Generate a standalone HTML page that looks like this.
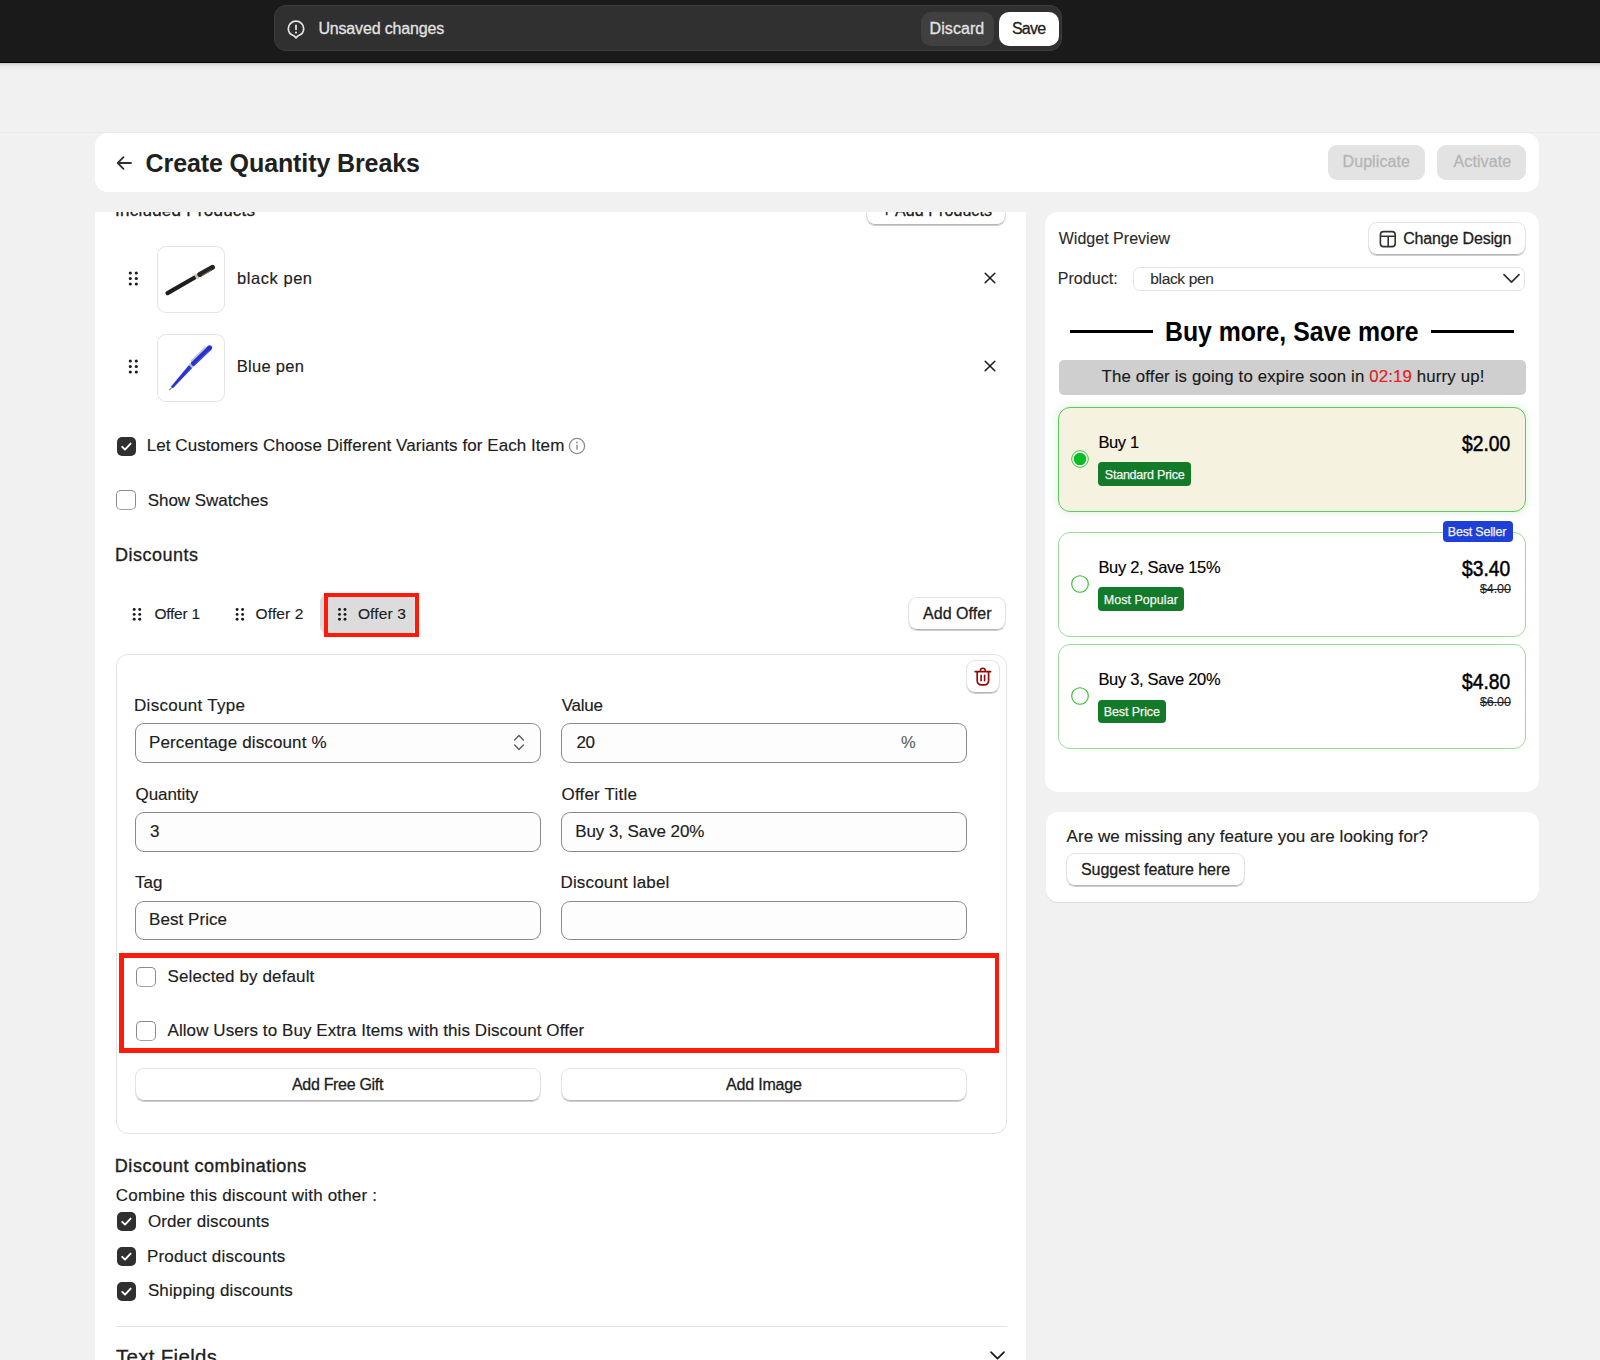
<!DOCTYPE html>
<html><head><meta charset="utf-8"><title>Create Quantity Breaks</title>
<style>
html,body{margin:0;padding:0}
body{width:1600px;height:1360px;overflow:hidden;position:relative;background:#f1f1f1;font-family:"Liberation Sans",sans-serif}
.t{position:absolute;line-height:1;white-space:nowrap}
</style></head><body>
<div style="position:absolute;left:0px;top:0px;width:1600px;height:63px;background:#1a1a1a"></div>
<div style="position:absolute;left:0px;top:62px;width:1600px;height:1px;background:#050505"></div>
<div style="position:absolute;left:0px;top:63px;width:1600px;height:8px;background:linear-gradient(to bottom,#c9c9c9 0%,#e2e2e2 25%,#ebebeb 55%,#f1f1f1 100%)"></div>
<div style="position:absolute;left:274px;top:5px;width:788px;height:46px;background:#303030;border:1px solid #3c3c3c;border-radius:12px;box-sizing:border-box"></div>
<svg style="position:absolute;left:287px;top:20px" width="18" height="19" viewBox="0 0 18 19">
<path d="M9 1.2C4.7 1.2 1.3 4.5 1.3 8.6c0 3.4 2.3 6.2 5.5 7.1L9 17.9l2.2-2.2c3.2-.9 5.5-3.7 5.5-7.1 0-4.1-3.4-7.4-7.7-7.4z" fill="none" stroke="#e3e3e3" stroke-width="1.7" stroke-linejoin="round"/>
<rect x="8.1" y="4.6" width="1.8" height="5.6" rx=".9" fill="#e3e3e3"/><circle cx="9" cy="12.6" r="1.1" fill="#e3e3e3"/></svg>
<div class="t" style="left:318.40px;top:21.00px;font-size:16px;font-weight:400;letter-spacing:-0.164px;color:#e3e3e3;-webkit-text-stroke:0.28px #e3e3e3;">Unsaved changes</div>
<div style="position:absolute;left:921px;top:12px;width:73px;height:34px;background:#404040;border-radius:10px"></div>
<div class="t" style="left:929.60px;top:21.00px;font-size:16px;font-weight:400;letter-spacing:0.067px;color:#e3e3e3;-webkit-text-stroke:0.28px #e3e3e3;">Discard</div>
<div style="position:absolute;left:999px;top:12px;width:60px;height:34px;background:#ffffff;border-radius:10px"></div>
<div class="t" style="left:1012.00px;top:21.00px;font-size:16px;font-weight:400;letter-spacing:-0.800px;color:#202020;-webkit-text-stroke:0.28px #202020;">Save</div>
<div style="position:absolute;left:0px;top:132px;width:1600px;height:1px;background:#eaeaea"></div>
<div style="position:absolute;left:95px;top:133px;width:1444px;height:59px;background:#fff;border-radius:13px"></div>
<svg style="position:absolute;left:114px;top:153px" width="20" height="20" viewBox="0 0 20 20">
<path d="M17 10H4M9.5 4.2 3.7 10l5.8 5.8" fill="none" stroke="#303030" stroke-width="1.8" stroke-linecap="round" stroke-linejoin="round"/></svg>
<div class="t" style="left:145.60px;top:151.00px;font-size:25px;font-weight:700;letter-spacing:-0.105px;color:#202020;">Create Quantity Breaks</div>
<div style="position:absolute;left:1328px;top:145px;width:97px;height:35px;background:#e3e3e3;border-radius:9px"></div>
<div class="t" style="left:1342.50px;top:154.00px;font-size:16px;font-weight:400;letter-spacing:0.088px;color:#b5b5b5;-webkit-text-stroke:0.28px #b5b5b5;">Duplicate</div>
<div style="position:absolute;left:1437px;top:145px;width:89px;height:35px;background:#e3e3e3;border-radius:9px"></div>
<div class="t" style="left:1453.60px;top:154.00px;font-size:16px;font-weight:400;letter-spacing:0.086px;color:#b5b5b5;-webkit-text-stroke:0.28px #b5b5b5;">Activate</div>
<div style="position:absolute;left:95px;top:212px;width:931px;height:1148px;background:#fff;overflow:hidden">
</div>
<div style="position:absolute;left:95px;top:212px;width:931px;height:40px;overflow:hidden">
<div style="position:absolute;left:-95px;top:-212px;width:1600px;height:300px">
<div class="t" style="left:115.00px;top:202.00px;font-size:17px;font-weight:400;letter-spacing:0.250px;color:#202020;-webkit-text-stroke:0.28px #202020;">Included Products</div>
<div style="position:absolute;left:866px;top:192px;width:140px;height:34px;background:#fff;border:1px solid #e3e3e3;border-bottom-color:#cfcfcf;border-radius:9px;box-shadow:inset 0 -1px 0 #b5b5b5;box-sizing:border-box"></div>
<div class="t" style="left:882.00px;top:203.00px;font-size:16px;font-weight:400;letter-spacing:0.077px;color:#202020;-webkit-text-stroke:0.28px #202020;">+ Add Products</div>
</div></div>
<svg style="position:absolute;left:0;top:0;overflow:visible" width="1" height="1"><circle cx="130.30" cy="273.00" r="1.55" fill="#1a1a1a"/><circle cx="130.30" cy="278.50" r="1.55" fill="#1a1a1a"/><circle cx="130.30" cy="284.00" r="1.55" fill="#1a1a1a"/><circle cx="136.30" cy="273.00" r="1.55" fill="#1a1a1a"/><circle cx="136.30" cy="278.50" r="1.55" fill="#1a1a1a"/><circle cx="136.30" cy="284.00" r="1.55" fill="#1a1a1a"/></svg>
<div style="position:absolute;left:157px;top:246px;width:68px;height:67px;border:1px solid #e3e3e3;border-radius:9px;box-sizing:border-box;background:#fff"></div>
<svg style="position:absolute;left:157px;top:246px" width="68" height="67" viewBox="0 0 68 67">
<path d="M10.6 47.1 L38.6 31.0" stroke="#1e1e1e" stroke-width="4.3" stroke-linecap="round"/>
<path d="M38.4 31.1 L42.9 28.5" stroke="#d6c6a0" stroke-width="4.9"/>
<path d="M42.8 28.5 L55.4 21.3" stroke="#242424" stroke-width="5" stroke-linecap="round"/>
<path d="M45 29.6 L54.5 24" stroke="#8a7a5a" stroke-width="0.9"/>
</svg>
<div class="t" style="left:237.00px;top:270.00px;font-size:16.5px;font-weight:400;letter-spacing:0.550px;color:#202020;-webkit-text-stroke:0.15px #202020;">black pen</div>
<svg style="position:absolute;left:983.5px;top:271.8px" width="12" height="12" viewBox="0 0 12 12"><path d="M1.2 1.2l9.6 9.6M10.8 1.2l-9.6 9.6" stroke="#1a1a1a" stroke-width="1.5" stroke-linecap="round"/></svg>
<svg style="position:absolute;left:0;top:0;overflow:visible" width="1" height="1"><circle cx="130.30" cy="361.00" r="1.55" fill="#1a1a1a"/><circle cx="130.30" cy="366.50" r="1.55" fill="#1a1a1a"/><circle cx="130.30" cy="372.00" r="1.55" fill="#1a1a1a"/><circle cx="136.30" cy="361.00" r="1.55" fill="#1a1a1a"/><circle cx="136.30" cy="366.50" r="1.55" fill="#1a1a1a"/><circle cx="136.30" cy="372.00" r="1.55" fill="#1a1a1a"/></svg>
<div style="position:absolute;left:157px;top:334px;width:68px;height:68px;border:1px solid #e3e3e3;border-radius:9px;box-sizing:border-box;background:#fff"></div>
<svg style="position:absolute;left:157px;top:334px" width="68" height="68" viewBox="0 0 68 68">
<path d="M12.6 55.8 L15.6 52.6" stroke="#8a8ea0" stroke-width="1.3" stroke-linecap="round"/>
<path d="M14.06 52.4 L32.0 30.9 L35.2 33.9 L15.94 54.2 Z" fill="#2a34d6"/>
<path d="M31.8 30.7 L34.8 27.5 L38.4 30.9 L35.4 34.1 Z" fill="#b3b7c6"/>
<path d="M36.6 29.2 L52.6 13.9" stroke="#2630cc" stroke-width="5.2" stroke-linecap="round"/>
<path d="M37.5 30.8 L52 16.8" stroke="#5560ff" stroke-width="1"/>
<path d="M34.4 27.0 L48.4 13.4" stroke="#c6c8d2" stroke-width="1.8" stroke-linecap="round"/>
</svg>
<div class="t" style="left:236.75px;top:358.00px;font-size:16.5px;font-weight:400;letter-spacing:0.286px;color:#202020;-webkit-text-stroke:0.15px #202020;">Blue pen</div>
<svg style="position:absolute;left:983.5px;top:359.8px" width="12" height="12" viewBox="0 0 12 12"><path d="M1.2 1.2l9.6 9.6M10.8 1.2l-9.6 9.6" stroke="#1a1a1a" stroke-width="1.5" stroke-linecap="round"/></svg>
<div style="position:absolute;left:116.7px;top:436.7px;width:19px;height:19px;background:#303030;border-radius:5px"></div>
<svg style="position:absolute;left:116.7px;top:436.7px" width="19" height="19" viewBox="0 0 19 19"><path d="M5.2 9.8l2.8 2.8 5.6-6" fill="none" stroke="#fff" stroke-width="1.9" stroke-linecap="round" stroke-linejoin="round"/></svg>
<div class="t" style="left:146.75px;top:437.00px;font-size:17px;font-weight:400;letter-spacing:0.065px;color:#202020;-webkit-text-stroke:0.15px #202020;">Let Customers Choose Different Variants for Each Item</div>
<svg style="position:absolute;left:568px;top:437px" width="18" height="18" viewBox="0 0 18 18">
<circle cx="9" cy="9" r="7.6" fill="none" stroke="#8a8a8a" stroke-width="1.3"/>
<rect x="8.3" y="7.6" width="1.4" height="5.2" rx=".5" fill="#8a8a8a"/><circle cx="9" cy="5.4" r=".9" fill="#8a8a8a"/></svg>
<div style="position:absolute;left:116px;top:490px;width:20px;height:20px;border:1px solid #8a8a8a;border-bottom-color:#a0a0a0;border-radius:5px;box-sizing:border-box;background:#fff"></div>
<div class="t" style="left:147.75px;top:492.00px;font-size:17px;font-weight:400;letter-spacing:-0.042px;color:#202020;-webkit-text-stroke:0.15px #202020;">Show Swatches</div>
<div class="t" style="left:115.00px;top:546.00px;font-size:18px;font-weight:400;letter-spacing:0.500px;color:#202020;-webkit-text-stroke:0.3px #202020;">Discounts</div>
<svg style="position:absolute;left:0;top:0;overflow:visible" width="1" height="1"><circle cx="134.20" cy="609.50" r="1.45" fill="#1a1a1a"/><circle cx="134.20" cy="614.40" r="1.45" fill="#1a1a1a"/><circle cx="134.20" cy="619.30" r="1.45" fill="#1a1a1a"/><circle cx="139.70" cy="609.50" r="1.45" fill="#1a1a1a"/><circle cx="139.70" cy="614.40" r="1.45" fill="#1a1a1a"/><circle cx="139.70" cy="619.30" r="1.45" fill="#1a1a1a"/></svg>
<div class="t" style="left:154.40px;top:606.00px;font-size:15.5px;font-weight:400;letter-spacing:-0.233px;color:#202020;-webkit-text-stroke:0.15px #202020;">Offer 1</div>
<svg style="position:absolute;left:0;top:0;overflow:visible" width="1" height="1"><circle cx="237.10" cy="609.50" r="1.45" fill="#1a1a1a"/><circle cx="237.10" cy="614.40" r="1.45" fill="#1a1a1a"/><circle cx="237.10" cy="619.30" r="1.45" fill="#1a1a1a"/><circle cx="242.60" cy="609.50" r="1.45" fill="#1a1a1a"/><circle cx="242.60" cy="614.40" r="1.45" fill="#1a1a1a"/><circle cx="242.60" cy="619.30" r="1.45" fill="#1a1a1a"/></svg>
<div class="t" style="left:255.60px;top:606.00px;font-size:15.5px;font-weight:400;letter-spacing:0.100px;color:#202020;-webkit-text-stroke:0.15px #202020;">Offer 2</div>
<div style="position:absolute;left:320px;top:594px;width:96px;height:40px;background:#dcdcdc;border-radius:8px"></div>
<svg style="position:absolute;left:0;top:0;overflow:visible" width="1" height="1"><circle cx="339.50" cy="609.50" r="1.45" fill="#1a1a1a"/><circle cx="339.50" cy="614.40" r="1.45" fill="#1a1a1a"/><circle cx="339.50" cy="619.30" r="1.45" fill="#1a1a1a"/><circle cx="345.00" cy="609.50" r="1.45" fill="#1a1a1a"/><circle cx="345.00" cy="614.40" r="1.45" fill="#1a1a1a"/><circle cx="345.00" cy="619.30" r="1.45" fill="#1a1a1a"/></svg>
<div class="t" style="left:357.90px;top:606.00px;font-size:15.5px;font-weight:400;letter-spacing:0.133px;color:#202020;-webkit-text-stroke:0.15px #202020;">Offer 3</div>
<div style="position:absolute;left:323.8px;top:593px;width:95.4px;height:43.7px;border:4px solid #fe1a0a;box-sizing:border-box"></div>
<div style="position:absolute;left:908px;top:597px;width:98px;height:34px;background:#fff;border:1px solid #e3e3e3;border-bottom-color:#cfcfcf;border-radius:9px;box-shadow:inset 0 -1px 0 #b5b5b5;box-sizing:border-box"></div>
<div class="t" style="left:923.00px;top:606.00px;font-size:16px;font-weight:400;letter-spacing:0.050px;color:#202020;-webkit-text-stroke:0.28px #202020;">Add Offer</div>
<div style="position:absolute;left:116px;top:654px;width:891px;height:480px;border:1px solid #e3e3e3;border-radius:12px;box-sizing:border-box"></div>
<div style="position:absolute;left:966px;top:660px;width:34px;height:34px;background:#fff;border:1px solid #e3e3e3;border-bottom-color:#cfcfcf;border-radius:9px;box-shadow:inset 0 -1px 0 #b5b5b5;box-sizing:border-box"></div>
<svg style="position:absolute;left:973px;top:667px" width="20" height="20" viewBox="0 0 20 20">
<path d="M2.2 4.6h15.4" stroke="#8e0b0b" stroke-width="1.7" stroke-linecap="round"/>
<path d="M7.4 4.4V3.6a2.4 2.4 0 0 1 4.8 0v.8" fill="none" stroke="#8e0b0b" stroke-width="1.5"/>
<path d="M4.2 4.8v8.8c0 2.4 1.7 4.3 4.3 4.3h2.8c2.6 0 4.3-1.9 4.3-4.3V4.8" fill="none" stroke="#8e0b0b" stroke-width="1.7"/>
<path d="M8.1 8.3v5.4M11.6 8.3v5.4" stroke="#8e0b0b" stroke-width="1.6" stroke-linecap="round"/></svg>
<div class="t" style="left:134.00px;top:697.00px;font-size:17px;font-weight:400;letter-spacing:0.292px;color:#202020;-webkit-text-stroke:0.15px #202020;">Discount Type</div>
<div style="position:absolute;left:135px;top:723px;width:405.8px;height:39.5px;background:#fdfdfd;border:1px solid #8a8a8a;border-top-color:#898989;border-radius:9px;box-sizing:border-box"></div>
<div class="t" style="left:149.00px;top:734.00px;font-size:17px;font-weight:400;letter-spacing:0.135px;color:#202020;-webkit-text-stroke:0.15px #202020;">Percentage discount %</div>
<svg style="position:absolute;left:512px;top:733px" width="14" height="19" viewBox="0 0 14 19">
<path d="M2.6 7l4.4-4.4L11.4 7M2.6 12l4.4 4.4 4.4-4.4" fill="none" stroke="#5c5c5c" stroke-width="1.4" stroke-linecap="round" stroke-linejoin="round"/></svg>
<div class="t" style="left:561.80px;top:697.00px;font-size:17px;font-weight:400;letter-spacing:-0.250px;color:#202020;-webkit-text-stroke:0.15px #202020;">Value</div>
<div style="position:absolute;left:561.2px;top:723px;width:405.6px;height:39.5px;background:#fdfdfd;border:1px solid #8a8a8a;border-top-color:#898989;border-radius:9px;box-sizing:border-box"></div>
<div class="t" style="left:576.50px;top:734.00px;font-size:17px;font-weight:400;letter-spacing:-0.500px;color:#202020;-webkit-text-stroke:0.15px #202020;">20</div>
<div class="t" style="left:901.00px;top:734.00px;font-size:16.5px;font-weight:400;letter-spacing:0.000px;color:#616161;-webkit-text-stroke:0.15px #616161;">%</div>
<div class="t" style="left:135.60px;top:786.00px;font-size:17px;font-weight:400;letter-spacing:-0.086px;color:#202020;-webkit-text-stroke:0.15px #202020;">Quantity</div>
<div style="position:absolute;left:135px;top:812.2px;width:405.8px;height:39.5px;background:#fdfdfd;border:1px solid #8a8a8a;border-top-color:#898989;border-radius:9px;box-sizing:border-box"></div>
<div class="t" style="left:150.00px;top:823.00px;font-size:17px;font-weight:400;letter-spacing:0.000px;color:#202020;-webkit-text-stroke:0.15px #202020;">3</div>
<div class="t" style="left:561.50px;top:786.00px;font-size:17px;font-weight:400;letter-spacing:0.200px;color:#202020;-webkit-text-stroke:0.15px #202020;">Offer Title</div>
<div style="position:absolute;left:561.2px;top:812.2px;width:405.6px;height:39.5px;background:#fdfdfd;border:1px solid #8a8a8a;border-top-color:#898989;border-radius:9px;box-sizing:border-box"></div>
<div class="t" style="left:575.25px;top:823.00px;font-size:17px;font-weight:400;letter-spacing:-0.089px;color:#202020;-webkit-text-stroke:0.15px #202020;">Buy 3, Save 20%</div>
<div class="t" style="left:135.00px;top:874.00px;font-size:17px;font-weight:400;letter-spacing:0.000px;color:#202020;-webkit-text-stroke:0.15px #202020;">Tag</div>
<div style="position:absolute;left:135px;top:900.6px;width:405.8px;height:39.5px;background:#fdfdfd;border:1px solid #8a8a8a;border-top-color:#898989;border-radius:9px;box-sizing:border-box"></div>
<div class="t" style="left:149.00px;top:911.00px;font-size:17px;font-weight:400;letter-spacing:0.056px;color:#202020;-webkit-text-stroke:0.15px #202020;">Best Price</div>
<div class="t" style="left:560.50px;top:874.00px;font-size:17px;font-weight:400;letter-spacing:0.154px;color:#202020;-webkit-text-stroke:0.15px #202020;">Discount label</div>
<div style="position:absolute;left:561.2px;top:900.6px;width:405.6px;height:39.5px;background:#fdfdfd;border:1px solid #8a8a8a;border-top-color:#898989;border-radius:9px;box-sizing:border-box"></div>
<div style="position:absolute;left:119px;top:953px;width:880px;height:100px;border:5px solid #fe1a0a;border-right-width:4px;box-sizing:border-box"></div>
<div style="position:absolute;left:136px;top:967px;width:20px;height:20px;border:1px solid #8a8a8a;border-bottom-color:#a0a0a0;border-radius:5px;box-sizing:border-box;background:#fff"></div>
<div class="t" style="left:167.50px;top:968.00px;font-size:17px;font-weight:400;letter-spacing:0.122px;color:#202020;-webkit-text-stroke:0.15px #202020;">Selected by default</div>
<div style="position:absolute;left:136px;top:1021px;width:20px;height:20px;border:1px solid #8a8a8a;border-bottom-color:#a0a0a0;border-radius:5px;box-sizing:border-box;background:#fff"></div>
<div class="t" style="left:167.50px;top:1022.00px;font-size:17px;font-weight:400;letter-spacing:0.076px;color:#202020;-webkit-text-stroke:0.15px #202020;">Allow Users to Buy Extra Items with this Discount Offer</div>
<div style="position:absolute;left:135px;top:1068px;width:406px;height:34px;background:#fff;border:1px solid #e3e3e3;border-bottom-color:#cfcfcf;border-radius:9px;box-shadow:inset 0 -1px 0 #b5b5b5;box-sizing:border-box"></div>
<div class="t" style="left:292.00px;top:1077.00px;font-size:16px;font-weight:400;letter-spacing:-0.317px;color:#202020;-webkit-text-stroke:0.28px #202020;">Add Free Gift</div>
<div style="position:absolute;left:561px;top:1068px;width:406px;height:34px;background:#fff;border:1px solid #e3e3e3;border-bottom-color:#cfcfcf;border-radius:9px;box-shadow:inset 0 -1px 0 #b5b5b5;box-sizing:border-box"></div>
<div class="t" style="left:726.00px;top:1077.00px;font-size:16px;font-weight:400;letter-spacing:-0.188px;color:#202020;-webkit-text-stroke:0.28px #202020;">Add Image</div>
<div class="t" style="left:114.85px;top:1157.00px;font-size:18px;font-weight:400;letter-spacing:0.520px;color:#202020;-webkit-text-stroke:0.38px #202020;">Discount combinations</div>
<div class="t" style="left:115.85px;top:1187.00px;font-size:17px;font-weight:400;letter-spacing:0.182px;color:#202020;-webkit-text-stroke:0.15px #202020;">Combine this discount with other :</div>
<div style="position:absolute;left:116.9px;top:1212.4px;width:19px;height:19px;background:#303030;border-radius:5px"></div>
<svg style="position:absolute;left:116.9px;top:1212.4px" width="19" height="19" viewBox="0 0 19 19"><path d="M5.2 9.8l2.8 2.8 5.6-6" fill="none" stroke="#fff" stroke-width="1.9" stroke-linecap="round" stroke-linejoin="round"/></svg>
<div class="t" style="left:147.90px;top:1213.00px;font-size:17px;font-weight:400;letter-spacing:0.093px;color:#202020;-webkit-text-stroke:0.15px #202020;">Order discounts</div>
<div style="position:absolute;left:116.9px;top:1246.6px;width:19px;height:19px;background:#303030;border-radius:5px"></div>
<svg style="position:absolute;left:116.9px;top:1246.6px" width="19" height="19" viewBox="0 0 19 19"><path d="M5.2 9.8l2.8 2.8 5.6-6" fill="none" stroke="#fff" stroke-width="1.9" stroke-linecap="round" stroke-linejoin="round"/></svg>
<div class="t" style="left:146.90px;top:1248.00px;font-size:17px;font-weight:400;letter-spacing:0.209px;color:#202020;-webkit-text-stroke:0.15px #202020;">Product discounts</div>
<div style="position:absolute;left:116.9px;top:1281.6px;width:19px;height:19px;background:#303030;border-radius:5px"></div>
<svg style="position:absolute;left:116.9px;top:1281.6px" width="19" height="19" viewBox="0 0 19 19"><path d="M5.2 9.8l2.8 2.8 5.6-6" fill="none" stroke="#fff" stroke-width="1.9" stroke-linecap="round" stroke-linejoin="round"/></svg>
<div class="t" style="left:147.90px;top:1282.00px;font-size:17px;font-weight:400;letter-spacing:0.129px;color:#202020;-webkit-text-stroke:0.15px #202020;">Shipping discounts</div>
<div style="position:absolute;left:115.85px;top:1326px;width:891px;height:1px;background:#e3e3e3"></div>
<div class="t" style="left:116.00px;top:1347.00px;font-size:20.5px;font-weight:400;letter-spacing:0.300px;color:#202020;-webkit-text-stroke:0.28px #202020;">Text Fields</div>
<svg style="position:absolute;left:989px;top:1349px" width="17" height="12" viewBox="0 0 17 12">
<path d="M2 3.2l6.5 6.5L15 3.2" fill="none" stroke="#1a1a1a" stroke-width="1.7" stroke-linecap="round" stroke-linejoin="round"/></svg>
<div style="position:absolute;left:1045px;top:212px;width:494px;height:580px;background:#fff;border-radius:13px"></div>
<div class="t" style="left:1058.70px;top:231.00px;font-size:16px;font-weight:400;letter-spacing:0.023px;color:#2a2a2a;-webkit-text-stroke:0.1px #2a2a2a;">Widget Preview</div>
<div style="position:absolute;left:1368px;top:222px;width:158px;height:34px;background:#fff;border:1px solid #e3e3e3;border-bottom-color:#cfcfcf;border-radius:9px;box-shadow:inset 0 -1px 0 #b5b5b5;box-sizing:border-box"></div>
<svg style="position:absolute;left:1378px;top:229px" width="20" height="20" viewBox="0 0 20 20">
<rect x="2.4" y="2.6" width="14.8" height="15" rx="3.2" fill="none" stroke="#303030" stroke-width="1.6"/>
<path d="M2.6 7.3h14.4M10.2 7.3v10" stroke="#303030" stroke-width="1.6"/></svg>
<div class="t" style="left:1403.20px;top:231.00px;font-size:16px;font-weight:400;letter-spacing:-0.167px;color:#202020;-webkit-text-stroke:0.28px #202020;">Change Design</div>
<div class="t" style="left:1057.70px;top:271.00px;font-size:16px;font-weight:400;letter-spacing:0.071px;color:#2a2a2a;-webkit-text-stroke:0.1px #2a2a2a;">Product:</div>
<div style="position:absolute;left:1133.4px;top:266.5px;width:392.1px;height:24px;background:#fff;border:1px solid #e3e3e3;border-radius:7px;box-sizing:border-box"></div>
<div class="t" style="left:1150.30px;top:271.00px;font-size:15.5px;font-weight:400;letter-spacing:-0.350px;color:#2a2a2a;-webkit-text-stroke:0.1px #2a2a2a;">black pen</div>
<svg style="position:absolute;left:1502px;top:272px" width="19" height="13" viewBox="0 0 19 13">
<path d="M2 2.6l7.5 7.5L17 2.6" fill="none" stroke="#303030" stroke-width="1.7" stroke-linecap="round" stroke-linejoin="round"/></svg>
<div style="position:absolute;left:1070.3px;top:330px;width:83px;height:3px;background:#000"></div>
<div class="t" style="left:1165.43px;top:318.00px;font-size:28px;font-weight:700;letter-spacing:0.000px;color:#000;transform:scaleX(0.8856);transform-origin:0 0;">Buy more, Save more</div>
<div style="position:absolute;left:1431px;top:330px;width:83px;height:3px;background:#000"></div>
<div style="position:absolute;left:1058.6px;top:360px;width:467.2px;height:34.5px;background:#cfcfcf;border-radius:5px"></div>
<div class="t" style="left:1101.60px;top:369.00px;font-size:16.8px;font-weight:400;letter-spacing:0.157px;color:#1a1a1a;-webkit-text-stroke:0.15px #1a1a1a;">The offer is going to expire soon in <span style="color:#ff1a1a">02:19</span> hurry up!</div>
<div style="position:absolute;left:1058px;top:407px;width:468px;height:104.5px;background:#f5f2e0;border:1px solid #5ccb5c;border-radius:12px;box-sizing:border-box;box-shadow:0 0 10px rgba(92,203,92,0.25)"></div>
<svg style="position:absolute;left:1070px;top:449px" width="20" height="20" viewBox="0 0 20 20"><circle cx="10" cy="10" r="8.3" fill="#fff" stroke="#3cc43c" stroke-width="1"/><circle cx="10" cy="10" r="6.3" fill="#0bbd25"/></svg>
<div class="t" style="left:1098.40px;top:434.00px;font-size:16.5px;font-weight:400;letter-spacing:-0.350px;color:#000;-webkit-text-stroke:0.15px #000;">Buy 1</div>
<div style="position:absolute;left:1098.1px;top:462.2px;width:93px;height:23.5px;background:#137a2a;border-radius:4px"></div>
<div class="t" style="left:1104.75px;top:469.00px;font-size:12.5px;font-weight:400;letter-spacing:-0.212px;color:#f4f4f4;-webkit-text-stroke:0.25px #f4f4f4;">Standard Price</div>
<div class="t" style="left:1461.85px;top:434.00px;font-size:21.5px;font-weight:400;letter-spacing:0.000px;color:#000;-webkit-text-stroke:0.5px #000;transform:scaleX(0.8963);transform-origin:0 0;">$2.00</div>
<div style="position:absolute;left:1058px;top:532px;width:468px;height:104.5px;background:#fff;border:1px solid #93de93;border-radius:12px;box-sizing:border-box"></div>
<svg style="position:absolute;left:1070px;top:574px" width="20" height="20" viewBox="0 0 20 20"><circle cx="10" cy="10" r="8.3" fill="#fff" stroke="#2ec02e" stroke-width="1.1"/></svg>
<div class="t" style="left:1098.40px;top:559.00px;font-size:16.5px;font-weight:400;letter-spacing:-0.314px;color:#000;-webkit-text-stroke:0.15px #000;">Buy 2, Save 15%</div>
<div style="position:absolute;left:1098.1px;top:587.2px;width:85.6px;height:23.5px;background:#137a2a;border-radius:4px"></div>
<div class="t" style="left:1103.75px;top:594.00px;font-size:12.5px;font-weight:400;letter-spacing:0.036px;color:#f4f4f4;-webkit-text-stroke:0.25px #f4f4f4;">Most Popular</div>
<div class="t" style="left:1461.85px;top:559.00px;font-size:21.5px;font-weight:400;letter-spacing:0.000px;color:#000;-webkit-text-stroke:0.5px #000;transform:scaleX(0.8963);transform-origin:0 0;">$3.40</div>
<div class="t" style="left:1480.00px;top:583.00px;font-size:12.5px;font-weight:400;letter-spacing:-0.100px;color:#222;-webkit-text-stroke:0.15px #222;text-decoration:line-through;">$4.00</div>
<div style="position:absolute;left:1058px;top:644.4px;width:468px;height:104.3px;background:#fff;border:1px solid #93de93;border-radius:12px;box-sizing:border-box"></div>
<svg style="position:absolute;left:1070px;top:686.4px" width="20" height="20" viewBox="0 0 20 20"><circle cx="10" cy="10" r="8.3" fill="#fff" stroke="#2ec02e" stroke-width="1.1"/></svg>
<div class="t" style="left:1098.40px;top:671.00px;font-size:16.5px;font-weight:400;letter-spacing:-0.314px;color:#000;-webkit-text-stroke:0.15px #000;">Buy 3, Save 20%</div>
<div style="position:absolute;left:1098.1px;top:699.6px;width:67.9px;height:23.5px;background:#137a2a;border-radius:4px"></div>
<div class="t" style="left:1103.75px;top:706.00px;font-size:12.5px;font-weight:400;letter-spacing:-0.083px;color:#f4f4f4;-webkit-text-stroke:0.25px #f4f4f4;">Best Price</div>
<div class="t" style="left:1461.85px;top:672.00px;font-size:21.5px;font-weight:400;letter-spacing:0.000px;color:#000;-webkit-text-stroke:0.5px #000;transform:scaleX(0.8963);transform-origin:0 0;">$4.80</div>
<div class="t" style="left:1480.00px;top:696.00px;font-size:12.5px;font-weight:400;letter-spacing:-0.100px;color:#222;-webkit-text-stroke:0.15px #222;text-decoration:line-through;">$6.00</div>
<div style="position:absolute;left:1443.1px;top:521.2px;width:69.8px;height:20.7px;background:#1e3fd8;border-radius:4px"></div>
<div class="t" style="left:1447.75px;top:526.00px;font-size:12.5px;font-weight:400;letter-spacing:-0.180px;color:#f4f4f4;-webkit-text-stroke:0.25px #f4f4f4;">Best Seller</div>
<div style="position:absolute;left:1045.5px;top:811.7px;width:493.5px;height:90.6px;background:#fff;border-radius:12px;box-shadow:0 1px 0 rgba(0,0,0,0.08)"></div>
<div class="t" style="left:1066.60px;top:828.00px;font-size:17px;font-weight:400;letter-spacing:0.052px;color:#202020;-webkit-text-stroke:0.15px #202020;">Are we missing any feature you are looking for?</div>
<div style="position:absolute;left:1066px;top:853px;width:179px;height:34px;background:#fff;border:1px solid #e3e3e3;border-bottom-color:#cfcfcf;border-radius:9px;box-shadow:inset 0 -1px 0 #b5b5b5;box-sizing:border-box"></div>
<div class="t" style="left:1080.90px;top:862.00px;font-size:16px;font-weight:400;letter-spacing:-0.005px;color:#202020;-webkit-text-stroke:0.28px #202020;">Suggest feature here</div>
</body></html>
